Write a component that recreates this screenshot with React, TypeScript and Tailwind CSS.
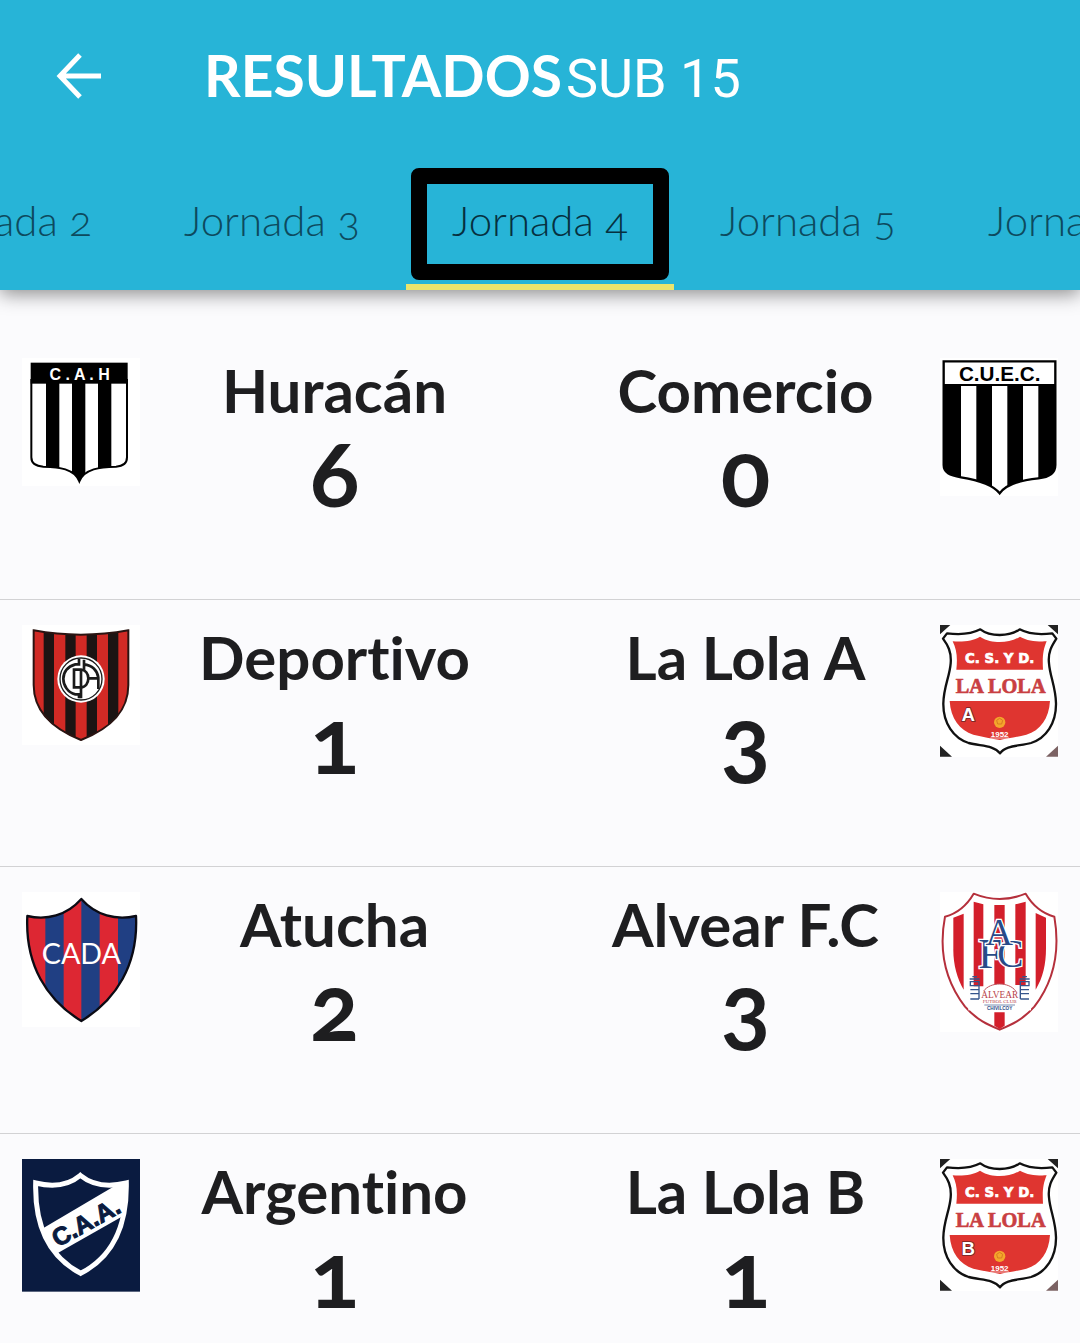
import type { ReactNode } from 'react';

interface Team {
    name: string;
    score: number;
    crest: ReactNode;
}

interface Match {
    home: Team;
    away: Team;
}

const tabs = ['Jornada 2', 'Jornada 3', 'Jornada 4', 'Jornada 5', 'Jornada 6'];
const activeTab = 'Jornada 4';

function HuracanCrest() {
    const body = 'M64 90 H351 V322 C351 340 338 349 318 350 C270 351 224 356 208 394 C192 356 148 351 100 350 C78 349 64 340 64 322 Z';
    return (
        <svg viewBox="36 24 354 384" className="block w-full" role="img" aria-label="Huracán">
            <rect x="36" y="24" width="354" height="384" fill="#fff" />
            <clipPath id="huracan"><path d={body} /></clipPath>
            <g clipPath="url(#huracan)">
                <rect x="60" y="90" width="300" height="310" fill="#fff" />
                <path d="M108 90h40v310h-40zM186 90h40v310h-40zM264 90h40v310h-40z" />
            </g>
            <path d={body} fill="none" stroke="#000" strokeWidth="6" />
            <rect x="62" y="38" width="291" height="63" />
            <text x="209" y="90" fontSize="48" fontWeight="700" textAnchor="middle" fill="#fff" fontFamily="Liberation Sans, sans-serif">C . A . H</text>
        </svg>
    );
}

function ComercioCrest() {
    const body = 'M38 34 H373 V345 C373 372 352 382 322 385 C270 390 225 404 206 430 C186 404 140 390 90 382 C56 376 38 368 38 345 Z';
    return (
        <svg viewBox="27 24 354 414" className="block w-full" role="img" aria-label="Comercio">
            <rect x="27" y="24" width="354" height="414" fill="#fff" />
            <clipPath id="comercio"><path d={body} /></clipPath>
            <g clipPath="url(#comercio)">
                <rect x="30" y="30" width="350" height="410" />
                <path d="M90 108h46v320h-46zM183 108h46v330h-46zM276 108h46v320h-46z" fill="#fff" />
                <rect x="38" y="34" width="335" height="68" fill="#fff" />
            </g>
            <path d={body} fill="none" stroke="#000" strokeWidth="7" />
            <text x="206" y="93" fontSize="62" fontWeight="700" textAnchor="middle" fontFamily="Liberation Sans, sans-serif">C.U.E.C.</text>
        </svg>
    );
}

function DeportivoCrest() {
    const body = 'M71 46 Q212 72 355 46 V210 C355 290 302 340 213 375 C125 340 71 290 71 210 Z';
    return (
        <svg viewBox="36 30 354 360" className="block w-full" role="img" aria-label="Deportivo">
            <rect x="36" y="30" width="354" height="360" fill="#fff" />
            <clipPath id="deportivo"><path d={body} /></clipPath>
            <g clipPath="url(#deportivo)">
                <rect x="60" y="40" width="310" height="340" fill="#d12a25" />
                <path d="M101 40h31v340h-31zM166 40h31v340h-31zM230 40h31v340h-31zM294 40h31v340h-31z" fill="#1c1413" />
            </g>
            <path d={body} fill="none" stroke="#2a1412" strokeWidth="6" />
            <circle cx="213" cy="192" r="71" fill="#fff" />
            <circle cx="213" cy="192" r="63" fill="none" stroke="#1b1b1b" strokeWidth="4" />
            <g fill="none" stroke="#1b1b1b" strokeWidth="8">
                <path d="M207 132 V148 H196 C172 154 160 172 160 191 C160 212 174 233 196 238 H207 V250" />
                <path d="M192 220 V164 H213 C226 164 235 176 235 190 C235 205 226 217 213 217 H188" />
                <path d="M213 164 V250 M222 164 V134 M222 148 C246 150 262 166 265 188 V222 M236 190 H266" />
            </g>
        </svg>
    );
}

function LaLolaCrest({ letter }: { letter: string }) {
    const outline = 'M48 55 C80 59 120 58 148 43 C165 56 180 60 206 60 C232 60 248 56 266 43 C294 58 334 59 364 55 L376 71 C364 90 350 110 354 145 C357 185 374 215 375 265 C376 325 345 370 300 384 C265 394 224 390 207 415 C188 390 150 394 113 384 C68 370 36 325 37 265 C38 215 56 185 59 145 C62 110 50 90 36 71 Z';
    return (
        <svg viewBox="27 30 354 396" className="block w-full" role="img" aria-label={`La Lola ${letter}`}>
            <rect x="27" y="30" width="354" height="396" fill="#fff" />
            <path d="M27 30h31L27 58zM350 30h31v28zM27 392l36 33H27z" fill="#222" />
            <path d="M381 392v33h-36z" fill="#7b6263" />
            <path d={outline} fill="#fff" stroke="#111" strokeWidth="7" strokeLinejoin="round" />
            <path d="M65 79 C100 81 125 78 147 65 C168 78 185 81 206 81 C228 81 247 77 267 65 C290 78 315 80 347 79 C336 105 334 125 336 164 H76 C80 125 77 105 65 79Z" fill="#df3530" />
            <path d="M56 258 H357 C354 310 328 347 286 359 C258 366 230 370 207 375 C183 370 155 366 127 359 C86 346 59 310 56 258Z" fill="#df3530" />
            <text x="206" y="143" fontSize="40" fontWeight="700" textAnchor="middle" fill="#fff" stroke="#fff" strokeWidth="2" fontFamily="DejaVu Sans, sans-serif">C. S. Y D.</text>
            <text x="209" y="233" fontSize="61" fontWeight="700" textAnchor="middle" fill="#c93f42" stroke="#c93f42" strokeWidth="2" fontFamily="Liberation Serif, serif">LA LOLA</text>
            <text x="112" y="317" fontSize="56" fontWeight="700" textAnchor="middle" fill="#fff" stroke="#6d2424" strokeWidth="5" paintOrder="stroke" fontFamily="Liberation Sans, sans-serif">{letter}</text>
            <circle cx="206" cy="322" r="17" fill="#f4a62c" />
            <path d="M197 316l9-6 9 6-3 11h-12z" fill="none" stroke="#d97a22" strokeWidth="3" />
            <text x="206" y="365" fontSize="24" fontWeight="700" textAnchor="middle" fill="#fff" fontFamily="Liberation Sans, sans-serif">1952</text>
            <path d="M178 369h56" stroke="#fff" strokeWidth="2" />
        </svg>
    );
}

function AtuchaCrest() {
    const body = 'M52 93 C110 106 170 92 214 42 C258 92 318 106 378 93 C385 240 318 345 214 408 C110 345 45 240 52 93 Z';
    return (
        <svg viewBox="36 21 354 405" className="block w-full" role="img" aria-label="Atucha">
            <rect x="36" y="21" width="354" height="405" fill="#fff" />
            <clipPath id="atucha"><path d={body} /></clipPath>
            <g clipPath="url(#atucha)">
                <rect x="40" y="30" width="350" height="390" fill="#dd2733" />
                <path d="M106 30h55v390h-55zM214 30h55v390h-55zM324 30h60v390h-60z" fill="#203f83" />
            </g>
            <path d={body} fill="none" stroke="#0b0b14" strokeWidth="7" strokeLinejoin="round" />
            <text x="214" y="236" fontSize="86" textAnchor="middle" fill="#fff" fontFamily="Lato, sans-serif">CADA</text>
        </svg>
    );
}

function AlvearCrest() {
    const body = 'M128 26 Q206 58 284 26 C304 60 335 85 370 95 C390 210 360 300 310 365 C275 405 240 420 206 434 C172 420 137 405 102 365 C52 300 20 210 42 95 C80 85 108 60 128 26 Z';
    return (
        <svg viewBox="27 21 354 420" className="block w-full" role="img" aria-label="Alvear F.C">
            <rect x="27" y="21" width="354" height="420" fill="#fff" />
            <path d={body} fill="#fff" stroke="#b5303c" strokeWidth="6" strokeLinejoin="round" />
            <g fill="#d31f2b">
                <path d="M67 98l31-12v228C78 282 66 235 67 190zM128 50l29 8v246h-29zM190 60h31v240h-31zM253 58l31-8v250h-31zM314 84l31 14v92c0 48-9 89-31 124zM190 382h31v40l-15 10-16-10z" />
            </g>
            <g textAnchor="middle" fill="#284a88" stroke="#fff" strokeWidth="8" paintOrder="stroke" fontFamily="Liberation Serif, serif">
                <text x="177" y="250" fontSize="128">F</text>
                <text x="238" y="247" fontSize="118">C</text>
                <text x="205" y="181" fontSize="114">A</text>
            </g>
            <rect x="112" y="306" width="188" height="70" fill="#fff" />
            <path d="M158 318 C178 290 234 290 254 318" fill="#fff" stroke="#c1545d" strokeWidth="3" />
            <g fill="none" stroke="#35558c" strokeWidth="4">
                <path d="M116 282h30M116 290h30M118 290v14M144 290v52M118 302h26M118 314h26M118 326h26M118 342h26M124 275h14" />
                <path d="M266 282h30M266 290h30M268 290v52M294 290v14M268 302h26M268 314h26M268 326h26M268 342h26M274 275h14" />
                <path d="M160 360h92" strokeWidth="2" />
            </g>
            <text x="206" y="340" fontSize="28" textAnchor="middle" fill="#b8414b" fontFamily="Liberation Serif, serif">ALVEAR</text>
            <text x="206" y="354" fontSize="15" textAnchor="middle" fill="#b8414b" fontFamily="Liberation Serif, serif">FUTBOL CLUB</text>
            <text x="206" y="375" fontSize="14" fontWeight="700" textAnchor="middle" fill="#284a88" fontFamily="Liberation Sans, sans-serif">CHIVILCOY</text>
        </svg>
    );
}

function ArgentinoCrest() {
    const body = 'M78 100 C125 112 175 108 212 77 C250 108 300 112 350 100 C352 225 312 320 213 371 C115 320 75 225 78 100 Z';
    return (
        <svg viewBox="37 28 354 398" className="block w-full" role="img" aria-label="Argentino">
            <rect x="37" y="28" width="354" height="398" fill="#0a1b40" />
            <clipPath id="argentino"><path d={body} /></clipPath>
            <path d="M90 242L320 106H360V188L130 318Z" fill="#fff" clipPath="url(#argentino)" />
            <path d={body} fill="none" stroke="#fff" strokeWidth="15" strokeLinejoin="miter" />
            <text x="230" y="243" fontSize="74" fontWeight="700" textAnchor="middle" fill="#0a1b40" stroke="#0a1b40" strokeWidth="3" transform="rotate(-29 230 220)" fontFamily="Liberation Sans, sans-serif">C.A.A.</text>
        </svg>
    );
}

const matches: Match[] = [
    {
        home: { name: 'Huracán', score: 6, crest: <HuracanCrest /> },
        away: { name: 'Comercio', score: 0, crest: <ComercioCrest /> }
    },
    {
        home: { name: 'Deportivo', score: 1, crest: <DeportivoCrest /> },
        away: { name: 'La Lola A', score: 3, crest: <LaLolaCrest letter="A" /> }
    },
    {
        home: { name: 'Atucha', score: 2, crest: <AtuchaCrest /> },
        away: { name: 'Alvear F.C', score: 3, crest: <AlvearCrest /> }
    },
    {
        home: { name: 'Argentino', score: 1, crest: <ArgentinoCrest /> },
        away: { name: 'La Lola B', score: 1, crest: <LaLolaCrest letter="B" /> }
    }
];

function TeamResult({ team }: { team: Team }) {
    return (
        <div className="flex-1 text-center font-bold text-[#1e1e20]">
            <h2 className="text-[60px] leading-[64px] [font-variant-ligatures:none]">{team.name}</h2>
            <p className="text-[92px] leading-[100px] oldstyle-nums">{team.score}</p>
        </div>
    );
}

export default function App() {
    return (
        <div className="flex h-screen flex-col overflow-hidden bg-[#fbfbfd] font-['Lato',sans-serif]">
            <header className="relative shrink-0 bg-[#27b4d7] shadow-[0_4px_18px_rgba(0,0,0,0.45)]">
                <div className="flex h-[152px] items-center px-14">
                    <button aria-label="Volver" className="mr-[100px] text-white">
                        <svg width="48" height="48" viewBox="0 0 48 48" fill="none" stroke="currentColor" strokeWidth="5">
                            <path d="M45 24H5M24 3L4 24L24 45" />
                        </svg>
                    </button>
                    <h1 className="flex items-baseline gap-1 text-white">
                        <span className="text-[57px] font-bold">RESULTADOS</span>
                        <span className="font-['Roboto'] text-[54px]">SUB 15</span>
                    </h1>
                </div>
                <nav className="flex h-[138px] justify-center overflow-hidden">
                    {tabs.map(tab => (
                        <button
                            key={tab}
                            aria-current={tab === activeTab ? 'page' : undefined}
                            className={`relative w-[268px] shrink-0 border-b-[6px] pt-1 text-[42px] font-light oldstyle-nums ${tab === activeTab ? 'border-[#ece46c] text-[#06303f]' : 'border-transparent text-[#0d4a5e]'}`}
                        >
                            {tab}
                            {tab === activeTab && (
                                <span className="absolute inset-x-[5px] top-4 bottom-1 rounded-lg border-[16px] border-black" />
                            )}
                        </button>
                    ))}
                </nav>
            </header>

            <main className="pt-[43px]">
                {matches.map(match => (
                    <section key={match.home.name} className="flex h-[267px] gap-[22px] border-b border-[#d2d2d4] px-[22px] pt-[25px]">
                        <div className="-mr-[22px] w-[118px] shrink-0">{match.home.crest}</div>
                        <TeamResult team={match.home} />
                        <TeamResult team={match.away} />
                        <div className="-ml-[22px] w-[118px] shrink-0">{match.away.crest}</div>
                    </section>
                ))}
            </main>
        </div>
    );
}
